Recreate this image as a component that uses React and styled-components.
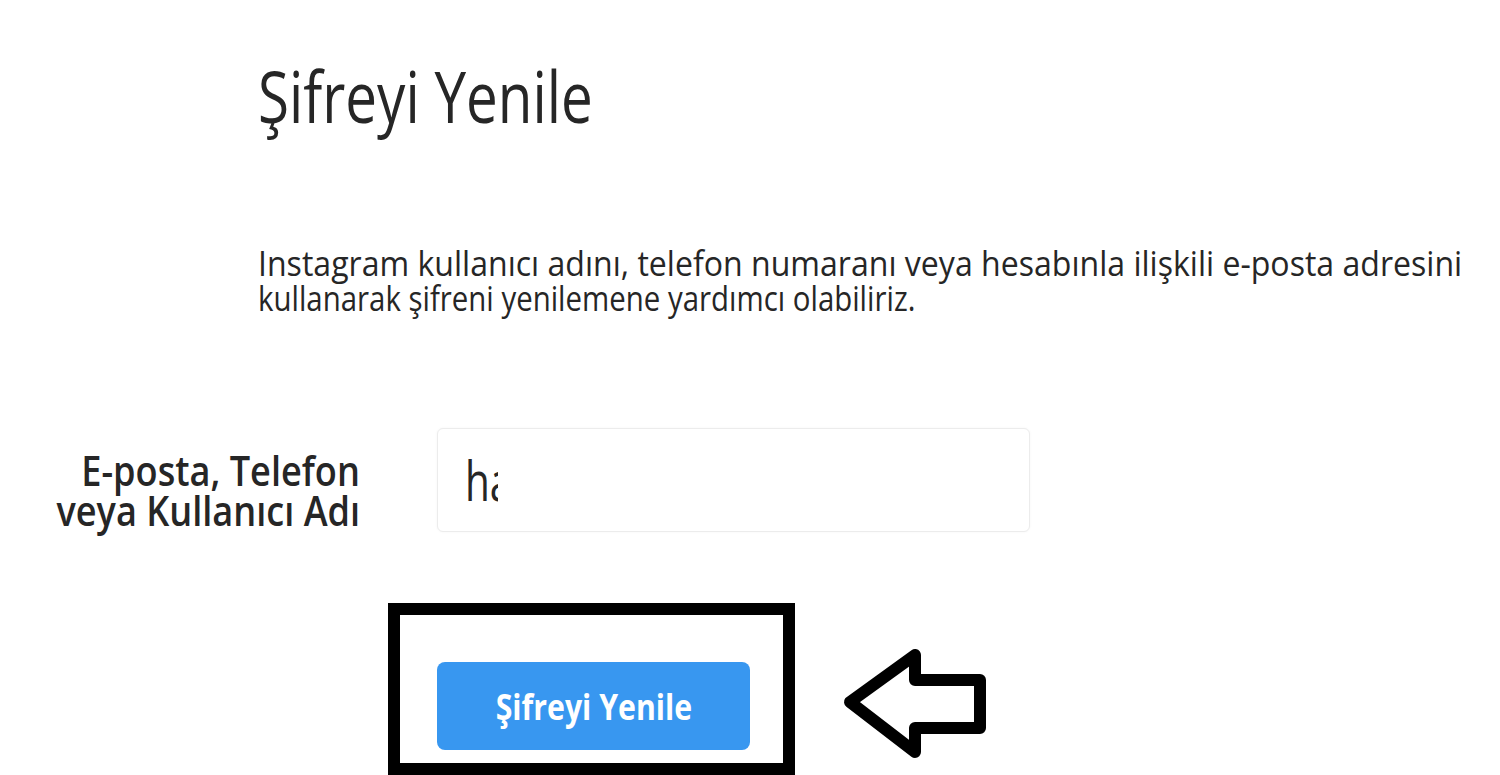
import React from "react";
import styled, { createGlobalStyle } from "styled-components";

const GlobalStyle = createGlobalStyle`
  html, body {
    margin: 0;
    padding: 0;
    background: #ffffff;
  }
  body {
    font-family: "Open Sans", "Noto Sans", "DejaVu Sans", sans-serif;
    color: #262626;
    overflow: hidden;
  }
`;

const Page = styled.main`
  width: 1500px;
  height: 775px;
  padding-top: 55px;
  box-sizing: border-box;
  overflow: hidden;
`;

// the screenshot is squeezed sideways, so text is narrowed with scaleX
const Squeeze = styled.span`
  display: inline-block;
  white-space: nowrap;
  transform: scaleX(${props => props.$scale || 0.8});
  transform-origin: ${props => props.$origin || "left"} center;
`;

const Title = styled.h1`
  margin: 0 0 0 258px;
  font-size: 72px;
  font-weight: 400;
  line-height: 80px;
  color: #262626;
`;

const Description = styled.p`
  margin: 110px 0 0 258px;
  font-size: 35px;
  line-height: 35px;
  color: #262626;
`;

const FormRow = styled.div`
  display: grid;
  grid-template-columns: 360px 593px;
  column-gap: 77px;
  align-items: center;
  margin-top: 113px;
`;

const Label = styled.label`
  text-align: right;
  font-size: 42px;
  font-weight: 600;
  line-height: 40px;
  color: #262626;
  padding-top: 20px;
`;

const InputBox = styled.div`
  height: 104px;
  box-sizing: border-box;
  border: 1px solid #ececec;
  border-radius: 6px;
  background: #fff;
  box-shadow: 0 0 3px rgba(0, 0, 0, 0.04);
  display: flex;
  align-items: center;
  padding-left: 27px;
  font-size: 54px;
  color: #262626;
`;

const Clipped = styled.span`
  display: inline-block;
  width: 0.2em;
  overflow: hidden;
  vertical-align: bottom;
`;

const ActionRow = styled.div`
  display: flex;
  align-items: flex-start;
  gap: 37px;
  padding-left: 388px;
  margin-top: 71px;
`;

const Frame = styled.div`
  border: 12px solid #000;
  padding: 47px 33px 13px 37px;
  width: 407px;
  height: 172px;
  box-sizing: border-box;
`;

const Button = styled.button`
  width: 313px;
  height: 88px;
  border: none;
  border-radius: 8px;
  background: #3897f0;
  color: #fff;
  font-family: "Open Sans", "Noto Sans", sans-serif;
  font-size: 36px;
  font-weight: 700;
  display: flex;
  align-items: center;
  justify-content: center;
  cursor: pointer;
`;

const ArrowIcon = styled.svg`
  margin-top: 39px;
  flex: none;
`;

function Arrow() {
  return (
    <ArrowIcon width="166" height="124" viewBox="0 0 166 124">
      <polygon
        points="18,60 83,13 83,38 148,38 148,86 83,86 83,110"
        fill="#fff"
        stroke="#000"
        strokeWidth="12"
        strokeLinejoin="round"
      />
    </ArrowIcon>
  );
}

export default function App() {
  return (
    <>
      <GlobalStyle />
      <Page>
        <Title>
          <Squeeze $scale={0.785}>Şifreyi Yenile</Squeeze>
        </Title>
        <Description>
          <Squeeze $scale={0.916}>
            Instagram kullanıcı adını, telefon numaranı veya hesabınla ilişkili e-posta adresini
          </Squeeze>
          <br />
          <Squeeze $scale={0.84}>kullanarak şifreni yenilemene yardımcı olabiliriz.</Squeeze>
        </Description>
        <FormRow>
          <Label>
            <Squeeze $scale={0.86} $origin="right">E-posta, Telefon</Squeeze>
            <br />
            <Squeeze $scale={0.86} $origin="right">veya Kullanıcı Adı</Squeeze>
          </Label>
          <InputBox>
            <Squeeze $scale={0.75}>
              h<Clipped>a</Clipped>
            </Squeeze>
          </InputBox>
        </FormRow>
        <ActionRow>
          <Frame>
            <Button>
              <Squeeze $scale={0.84} $origin="center">Şifreyi Yenile</Squeeze>
            </Button>
          </Frame>
          <Arrow />
        </ActionRow>
      </Page>
    </>
  );
}
